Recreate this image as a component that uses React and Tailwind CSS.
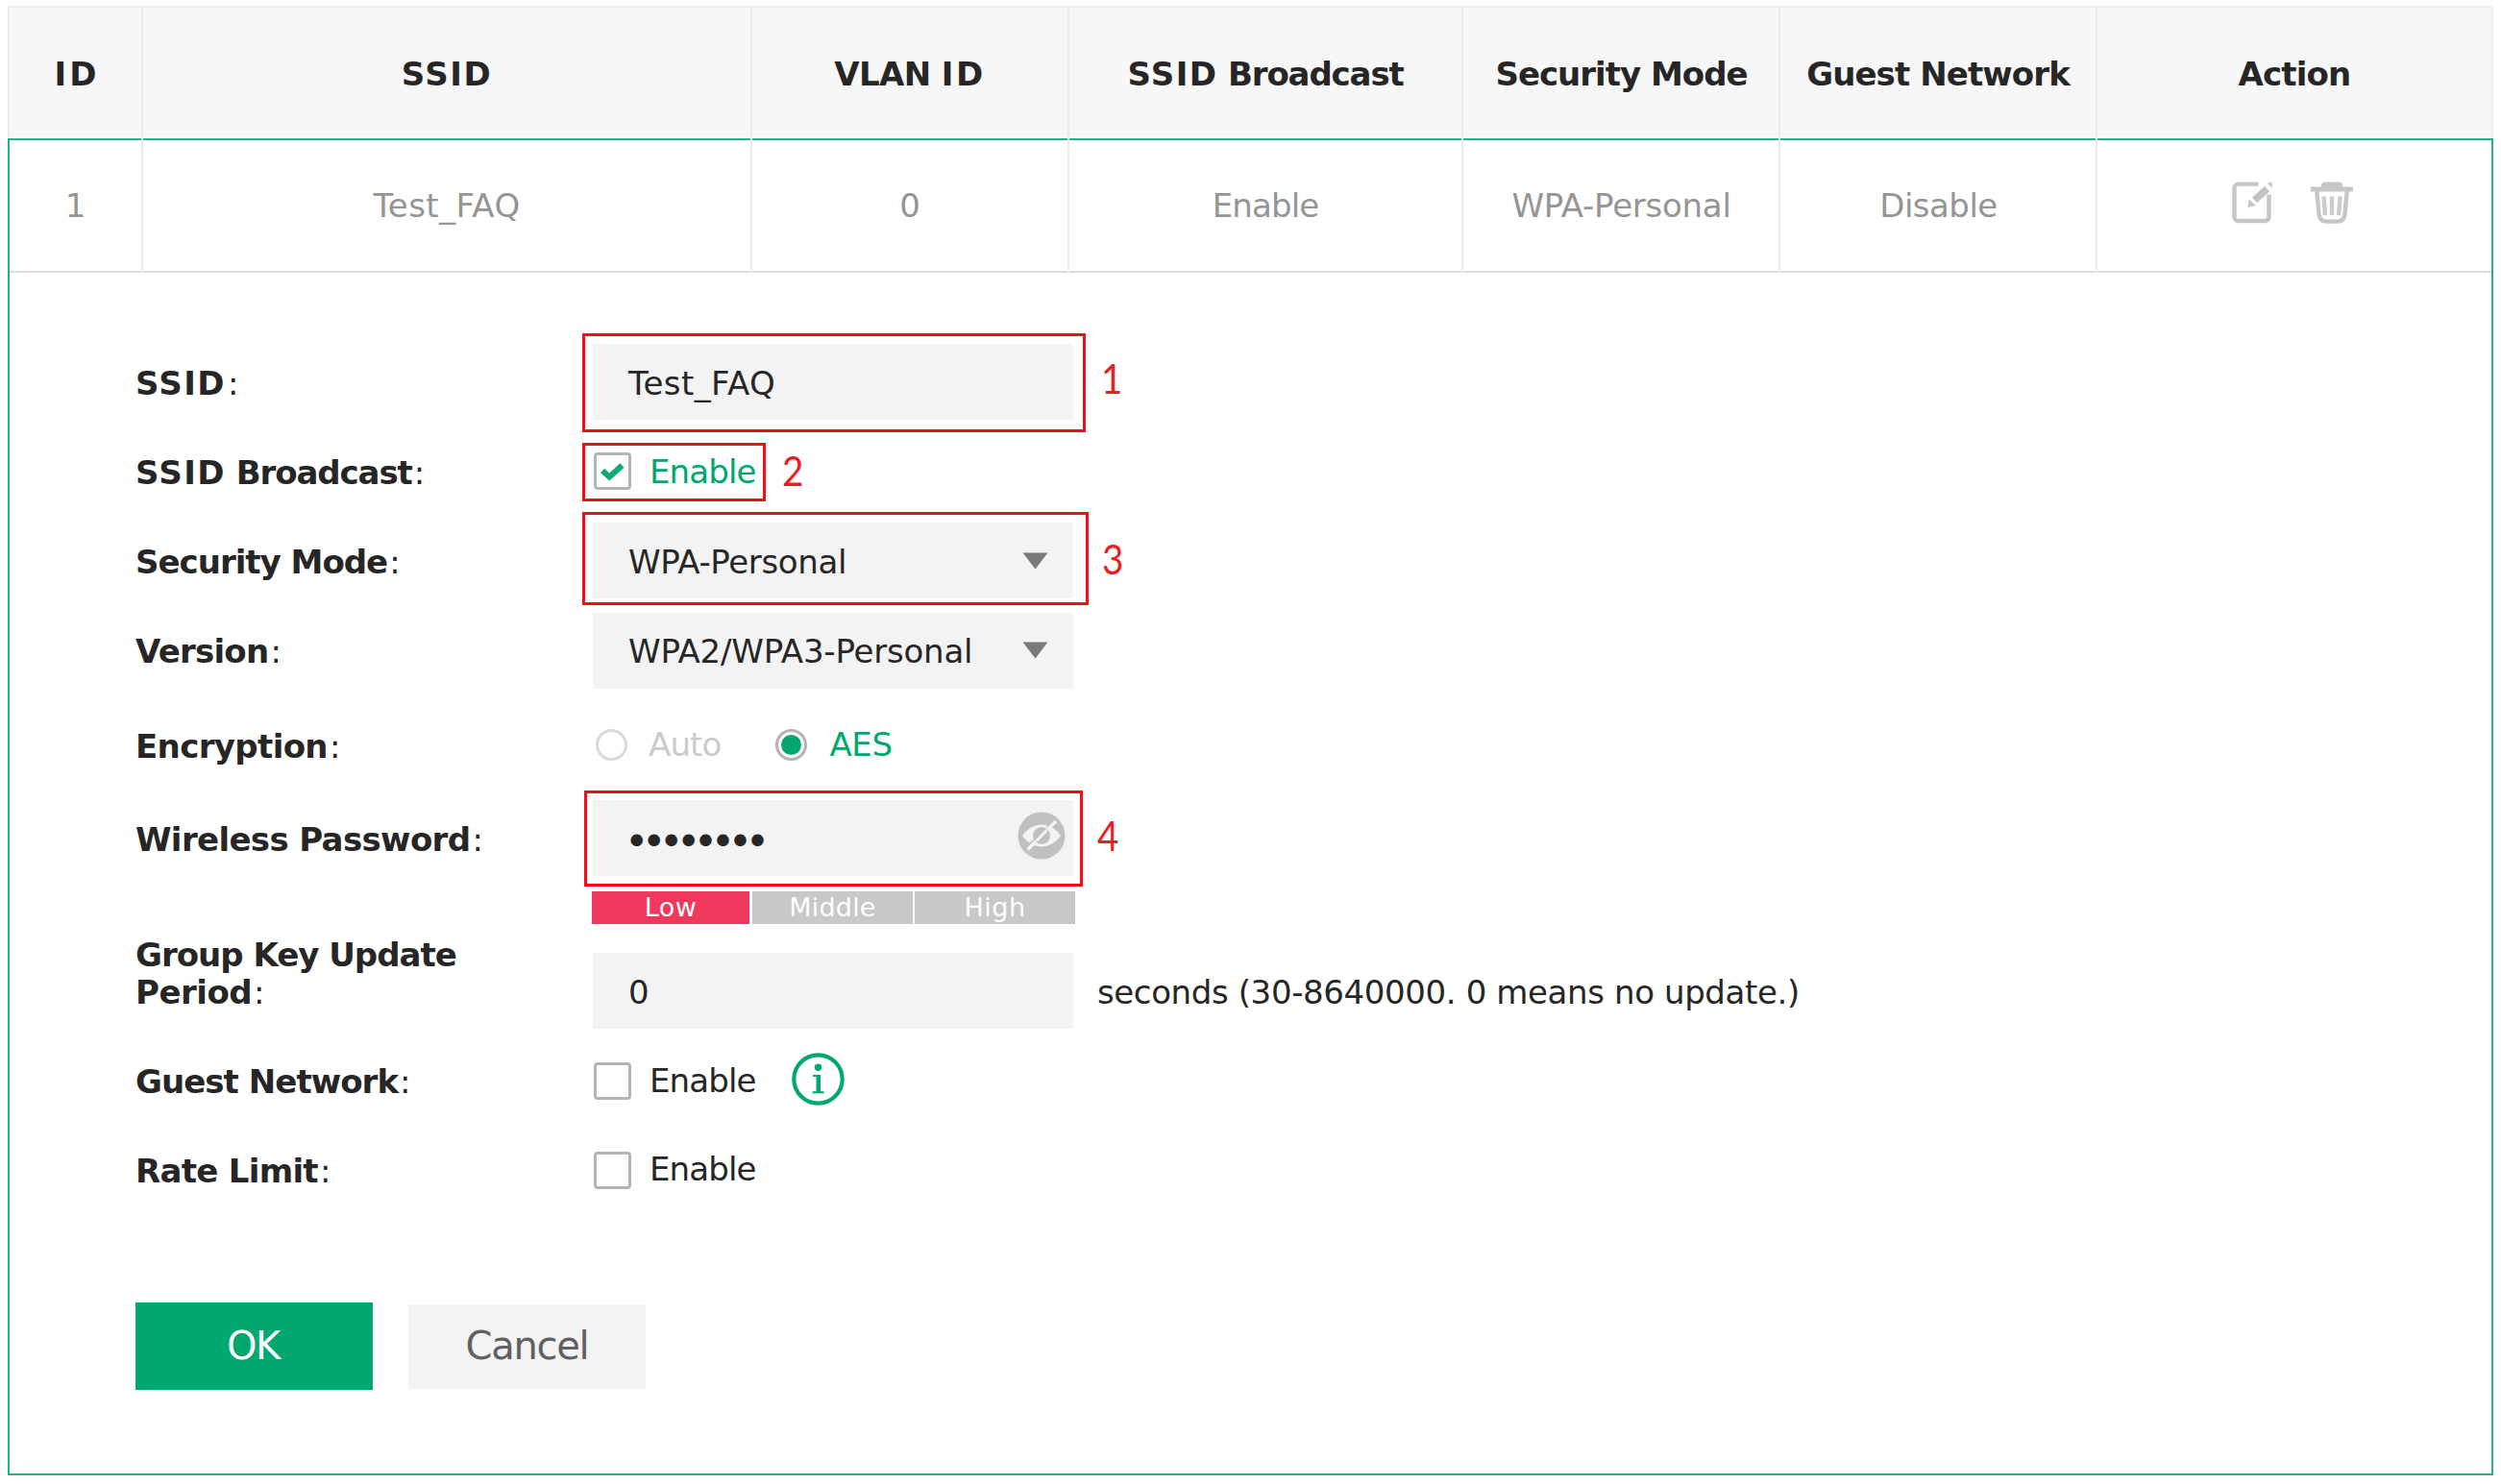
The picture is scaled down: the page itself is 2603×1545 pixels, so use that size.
import React from "react";

function EditIcon() {
  return (
    <svg width="43" height="44" viewBox="0 0 43 44" fill="none">
      <path d="M27.5 2.6H6.5a4 4 0 0 0-4 4V37a4 4 0 0 0 4 4H34.500a4 4 0 0 0 4-4V13.500" stroke="#c6c6c6" strokeWidth="4.4" />
      <path d="M23.500 19.500L36.500 7.500" stroke="#c3c3c3" strokeWidth="7.500" />
      <path d="M16.500 27L17.500 18.500L25 25Z" fill="#c6c6c6" />
      <path d="M36.500 1.500L41 0.500L42.500 3L41.500 6.500Z" fill="#cccccc" />
    </svg>
  );
}

function TrashIcon() {
  return (
    <svg width="44" height="44" viewBox="0 0 44 44" fill="none">
      <path d="M11 6.500V4a3.500 3.500 0 0 1 3.500-3.500h15A3.500 3.500 0 0 1 33 4v2.500Z" fill="#c6c6c6" />
      <path d="M0 8H44" stroke="#c6c6c6" strokeWidth="5" />
      <path d="M6.200 9L8.500 34.500Q10 41.600 16 41.600H28Q34 41.600 35.500 34.500L37.800 9" stroke="#c6c6c6" strokeWidth="4.400" />
      <path d="M13.500 15.500L15 35M22 15.500V35M30.500 15.500L29 35" stroke="#cbcbcb" strokeWidth="4.400" />
    </svg>
  );
}

function HiddenEyeIcon() {
  return (
    <svg width="50" height="50" viewBox="0 0 50 50" fill="none">
      <circle cx="25" cy="25" r="24.500" fill="#c0c0c0" />
      <path d="M5 25C11 17 18 13.500 25 13.500S39 17 45 25C39 33 32 36.500 25 36.500S11 33 5 25Z" fill="#f3f3f3" />
      <circle cx="25" cy="25" r="9" fill="#c0c0c0" />
      <path d="M19.500 30.500L30.500 19.500" stroke="#f3f3f3" strokeWidth="3" />
      <path d="M30.500 16L37.500 9M11 35.500L17 29.500" stroke="#c0c0c0" strokeWidth="2" />
      <path d="M31 19L40 10M10.500 39.500L19 31" stroke="#f3f3f3" strokeWidth="3.600" />
    </svg>
  );
}

function InfoIcon() {
  return (
    <svg width="55" height="55" viewBox="0 0 55 55" fill="none" className="mb-[3px] ml-[37px]">
      <circle cx="27.500" cy="27.500" r="25.200" stroke="#00a870" strokeWidth="4.200" />
      <circle cx="27.500" cy="15.300" r="3.700" fill="#00a870" />
      <path d="M22 23H30V40.300H33.500V42.300H21.500V40.300H25.500V25H22Z" fill="#00a870" />
    </svg>
  );
}

function Arrow() {
  return (
    <svg width="27" height="18" viewBox="0 0 27 18" className="mr-[26px]">
      <path d="M0.500 0.500H26.500L13.500 17.500Z" fill="#7a7a7a" />
    </svg>
  );
}

function HeadCell({ width, children }) {
  return (
    <div className={`${width} border-r-2 border-[#ececec] pb-[2px] bg-white`}>
      <div className="flex h-full items-center justify-center whitespace-pre bg-[#f7f7f7] pt-[4px] font-bold text-[#262626]">
        {children}
      </div>
    </div>
  );
}

function Cell({ width, last, children }) {
  return (
    <div className={`${width} ${last ? "" : "border-r-2"} border-[#ececec]`}>
      <div className="flex h-full items-center justify-center border-t-2 border-b-2 border-t-[#22b481] border-b-[#dcdcdc] pt-[1px]">
        {children}
      </div>
    </div>
  );
}

function Row({ height, label, children }) {
  return (
    <div className={`${height} flex items-center`}>
      <div className="w-[477px] shrink-0 whitespace-pre pt-[3px] pl-[1px]">
        <span className="font-bold">{label}</span>
        <span className="ml-[2px]">:</span>
      </div>
      {children}
    </div>
  );
}

function Mark({ box, digit, children }) {
  return (
    <div className={`${box} absolute border-3 border-[#f20d19]`}>
      <span className={`${digit} absolute origin-left scale-x-92 font-['Lato',sans-serif] text-[42px] leading-none text-[#ee1c25]`}>{children}</span>
    </div>
  );
}

const FIELD = "relative flex h-[79px] w-[500px] shrink-0 items-center justify-between bg-[#f3f3f3] whitespace-pre";

function Checkbox({ checked }) {
  return (
    <span className="ml-[1px] flex h-[39px] w-[39px] items-center justify-center rounded-[4px] border-3 border-[#b4b4b8] bg-white">
      {checked && (
        <svg width="25" height="20" viewBox="0 0 25 20" fill="none">
          <path d="M2 9L9.300 15.500L22.500 3.500" stroke="#0dac75" strokeWidth="6" />
        </svg>
      )}
    </span>
  );
}

export default function App() {
  return (
    <main className="h-[1545px] w-[2603px] overflow-hidden bg-white pt-[6px] pl-[8px] font-['DejaVu_Sans',Verdana,sans-serif] text-[34px] leading-[39px] text-[#262626]">
      <header className="flex h-[138px] w-[2587px] border-t-2 border-l-2 border-[#ececec]">
        <HeadCell width="w-[139px]"><span className="pl-[3px] tracking-[3px]">ID</span></HeadCell>
        <HeadCell width="w-[634px]"><span className="tracking-[1.600px]">SSID</span></HeadCell>
        <HeadCell width="w-[330px]"><span className="tracking-[-0.600px]">VLAN </span><span className="tracking-[2.500px]">ID</span></HeadCell>
        <HeadCell width="w-[410px]"><span className="tracking-[1.400px]">SSID</span><span className="tracking-[-1.150px]"> Broadcast</span></HeadCell>
        <HeadCell width="w-[330px]"><span className="pl-[1px] tracking-[-1px]">Security Mode</span></HeadCell>
        <HeadCell width="w-[330px]"><span className="tracking-[-0.900px]">Guest Network</span></HeadCell>
        <HeadCell width="w-[412px]"><span className="tracking-[-0.850px]">Action</span></HeadCell>
      </header>

      <section className="h-[1392px] w-[2587px] border-x-2 border-b-2 border-[#22b481]">
        <div className="flex h-[140px] text-[#959595]">
          <Cell width="w-[139px]">1</Cell>
          <Cell width="w-[634px]"><span className="tracking-[0.420px]">Test_FAQ</span></Cell>
          <Cell width="w-[330px]">0</Cell>
          <Cell width="w-[410px]"><span className="tracking-[-0.880px]">Enable</span></Cell>
          <Cell width="w-[330px]"><span className="pl-[1px] tracking-[-0.260px]">WPA-Personal</span></Cell>
          <Cell width="w-[330px]"><span className="pl-[1px] tracking-[-0.530px]">Disable</span></Cell>
          <Cell width="w-[410px]" last>
            <div className="flex gap-[39px] pr-[4px] pb-[7px]">
              <EditIcon />
              <TrashIcon />
            </div>
          </Cell>
        </div>

        <form className="flex flex-col pt-[67px] pl-[130px]">
          <Row height="h-[93px]" label={<span className="tracking-[1.400px]">SSID</span>}>
            <div className={FIELD}>
              <span className="pt-[3px] pl-[37px] tracking-[0.420px]">Test_FAQ</span>
              <Mark box="-left-[11px] -top-[11px] h-[103px] w-[524px]" digit="left-[537px] top-[23px]">1</Mark>
            </div>
          </Row>
          <Row height="h-[93px]" label={<><span className="tracking-[1.400px]">SSID</span><span className="tracking-[-1.100px]"> Broadcast</span></>}>
            <div className="relative flex h-[40px] items-center">
              <Checkbox checked />
              <span className="ml-[19px] pt-[2px] tracking-[-0.880px] text-[#00a870]">Enable</span>
              <Mark box="-left-[11px] -top-[10px] h-[61px] w-[191px]" digit="left-[205px] top-[5px]">2</Mark>
            </div>
          </Row>
          <Row height="h-[93px]" label={<span className="tracking-[-1px]">Security Mode</span>}>
            <div className={FIELD}>
              <span className="pt-[3px] pl-[37px] tracking-[-0.350px]">WPA-Personal</span>
              <Arrow />
              <Mark box="-left-[11px] -top-[11px] h-[97px] w-[527px]" digit="left-[538px] top-[25px]">3</Mark>
            </div>
          </Row>
          <Row height="h-[94px]" label={<span className="tracking-[-0.760px]">Version</span>}>
            <div className={FIELD}>
              <span className="pt-[3px] pl-[37px] tracking-[-0.200px]">WPA2/WPA3-Personal</span>
              <Arrow />
            </div>
          </Row>
          <Row height="h-[103px]" label={<span className="tracking-[-0.640px]">Encryption</span>}>
            <span className="ml-[3px] h-[33px] w-[33px] rounded-full border-3 border-[#dadada]" />
            <span className="ml-[22px] tracking-[-0.880px] text-[#cbcbcb]">Auto</span>
            <span className="ml-[57px] flex h-[33px] w-[33px] items-center justify-center rounded-full border-3 border-[#b4b4b8]">
              <span className="h-[21px] w-[21px] shrink-0 rounded-full bg-[#00a870]" />
            </span>
            <span className="ml-[23px] tracking-[-0.370px] text-[#00a870]">AES</span>
          </Row>
          <Row height="h-[91px]" label={<span className="tracking-[-0.640px]">Wireless Password</span>}>
            <div className={FIELD}>
              <span className="pt-[7px] pl-[33px] text-[43px] tracking-[-7.400px]">••••••••</span>
              <span className="mr-[8px] mb-[5px]"><HiddenEyeIcon /></span>
              <Mark box="-left-[9px] -top-[10px] h-[100px] w-[519px]" digit="left-[531px] top-[23px]">4</Mark>
            </div>
          </Row>
          <div className="mt-[10px] ml-[476px] flex h-[34px] text-center text-[27px] leading-[34px] text-white">
            <span className="mr-[3px] w-[164px] bg-[#f0385d] tracking-[0.500px]">Low</span>
            <span className="mr-[2px] w-[167px] bg-[#c8c8c8] tracking-[0.200px]">Middle</span>
            <span className="w-[167px] bg-[#c8c8c8] tracking-[0.500px]">High</span>
          </div>
          <div className="mt-[12px] flex h-[97px]">
            <div className="w-[477px] whitespace-pre pt-[1px] pl-[1px]">
              <span className="block font-bold tracking-[-1px]">Group Key Update</span>
              <span className="font-bold tracking-[-0.500px]">Period</span>
              <span className="ml-[2px]">:</span>
            </div>
            <div className="flex items-center pt-[18px]">
              <div className={FIELD}>
                <span className="pt-[3px] pl-[37px]">0</span>
              </div>
              <span className="ml-[25px] whitespace-pre pt-[3px] tracking-[-0.380px]">seconds (30-8640000. 0 means no update.)</span>
            </div>
          </div>
          <Row height="h-[108px]" label={<span className="tracking-[-0.950px]">Guest Network</span>}>
            <Checkbox />
            <span className="ml-[19px] pt-[1px] tracking-[-0.880px]">Enable</span>
            <InfoIcon />
          </Row>
          <Row height="h-[78px]" label={<span className="tracking-[-0.700px]">Rate Limit</span>}>
            <Checkbox />
            <span className="ml-[19px] pb-[1px] tracking-[-0.880px]">Enable</span>
          </Row>
          <div className="mt-[99px] ml-[1px] flex items-center gap-[37px] text-[40px]">
            <button type="button" className="h-[91px] w-[247px] bg-[#00a870] pr-[2px] tracking-[-1.400px] text-white">OK</button>
            <button type="button" className="h-[88px] w-[247px] bg-[#f3f3f3] tracking-[-1.280px] text-[#606060]">Cancel</button>
          </div>
        </form>
      </section>
    </main>
  );
}
